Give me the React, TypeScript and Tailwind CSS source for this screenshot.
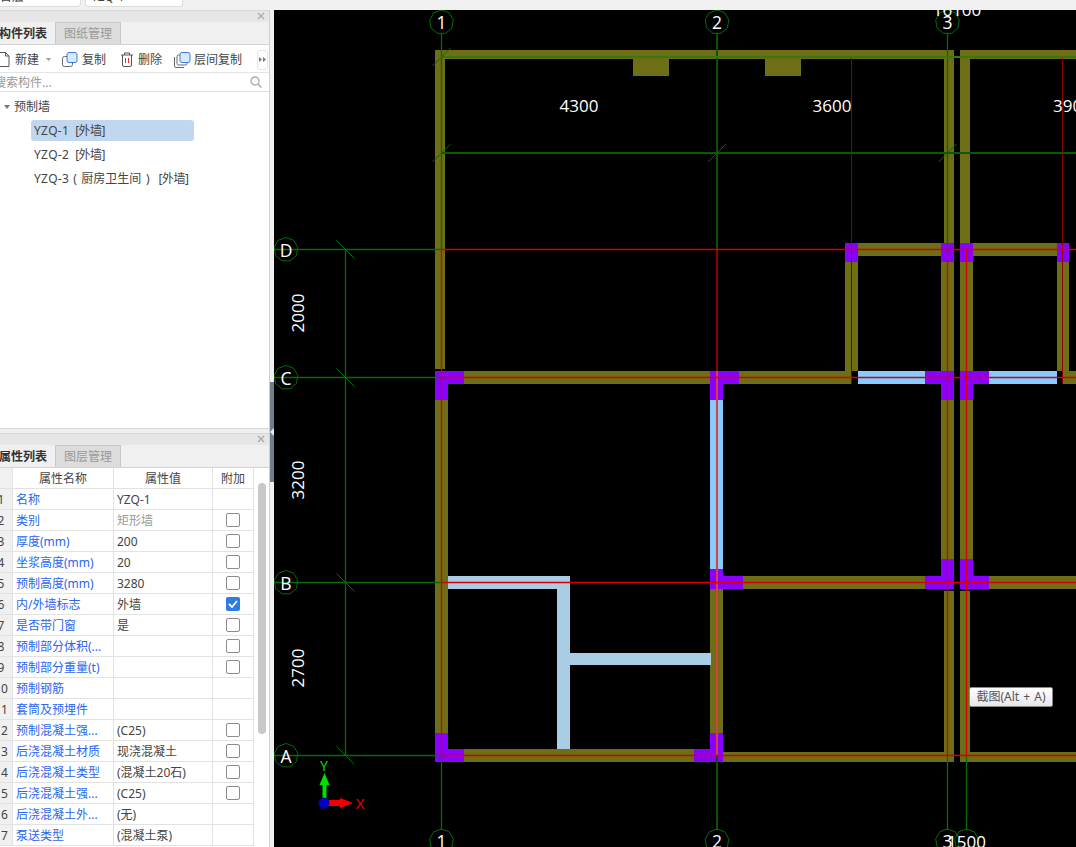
import React from 'react';

const OLIVE = '#6e6e16';
const PURPLE = '#8a00ff';
const BLUE = '#8acbff';
const PALE = '#a9cde4';

type R = [number, number, number, number];

// x1, y1, x2, y2 in page coordinates
const olive: R[] = [
  [435, 50, 954, 59],
  [960, 50, 1076, 59],
  [633, 59, 669, 76],
  [765, 59, 801, 76],
  [435, 59, 445, 369],
  [944, 59, 954, 243],
  [960, 59, 970, 243],
  [858, 243, 941, 256],
  [973, 243, 1057, 256],
  [845, 262, 858, 371],
  [941, 262, 954, 371],
  [960, 262, 973, 371],
  [1057, 262, 1069, 371],
  [464, 371, 710, 384],
  [739, 371, 852, 384],
  [1063, 371, 1076, 384],
  [941, 400, 954, 559],
  [960, 400, 973, 559],
  [435, 400, 448, 733],
  [743, 576, 925, 589],
  [989, 576, 1076, 589],
  [710, 589, 723, 733],
  [944, 591, 954, 762],
  [960, 591, 970, 762],
  [464, 749, 694, 762],
  [723, 752, 954, 762],
  [960, 752, 1076, 762],
];

const purple: R[] = [
  [845, 243, 858, 262],
  [941, 243, 954, 262],
  [960, 243, 973, 262],
  [1057, 243, 1069, 262],
  [435, 371, 464, 384],
  [435, 371, 448, 400],
  [710, 371, 739, 384],
  [710, 371, 723, 400],
  [925, 371, 954, 384],
  [941, 371, 954, 400],
  [960, 371, 989, 384],
  [960, 371, 973, 400],
  [710, 569, 723, 589],
  [710, 576, 743, 589],
  [925, 576, 954, 589],
  [941, 559, 954, 589],
  [960, 559, 973, 589],
  [960, 576, 989, 589],
  [435, 733, 448, 762],
  [435, 749, 464, 762],
  [710, 733, 723, 762],
  [694, 749, 723, 762],
];

const blue: R[] = [
  [858, 371, 925, 384],
  [989, 371, 1057, 384],
  [710, 400, 723, 569],
];

const pale: R[] = [
  [448, 576, 570, 589],
  [557, 576, 570, 749],
  [570, 653, 711, 665],
];

const GREEN = '#0a6a0a';
const RED = '#d80000';

// x1, y1, x2, y2, colour, width
const lines: [number, number, number, number, string, number][] = [
  [441.5, 33, 441.5, 249, GREEN, 1.3],
  [441.5, 249, 441.5, 755, RED, 1.3],
  [441.5, 755, 441.5, 830, GREEN, 1.3],
  [717, 33, 717, 249, '#0a5200', 2],
  [717, 249, 717, 371, '#8b0000', 2],
  [717, 371, 717, 755, '#d8403c', 2],
  [717, 755, 717, 830, '#0a5200', 2],
  [947.5, 33, 947.5, 249, GREEN, 1.3],
  [947.5, 249, 947.5, 755, RED, 1.3],
  [947.5, 755, 947.5, 830, GREEN, 1.3],
  [966.5, 249, 966.5, 755, RED, 1.3],
  [966.5, 755, 966.5, 830, GREEN, 1.3],
  [851.5, 58, 851.5, 384, '#8b0000', 1],
  [1062.5, 58, 1062.5, 384, '#8b0000', 1],
  [441, 57, 1076, 57, '#37780f', 2],
  [441, 153, 1076, 153, '#0a5a00', 2],
  [274, 249.5, 441, 249.5, GREEN, 1.3],
  [441, 249.5, 1076, 249.5, RED, 1.3],
  [274, 377.5, 441, 377.5, GREEN, 1.3],
  [441, 377.5, 1076, 377.5, RED, 1.3],
  [274, 582.5, 441, 582.5, GREEN, 1.3],
  [441, 582.5, 1076, 582.5, RED, 1.3],
  [274, 755.5, 441, 755.5, GREEN, 1.3],
  [441, 755.5, 1076, 755.5, RED, 1.3],
  [345.5, 249, 345.5, 756, GREEN, 1.3],
];

const ticks: [number, number, number][] = [
  [441.5, 57, 1],
  [441.5, 153, 1],
  [717, 153, 1],
  [947.5, 153, 1],
  [345.5, 249.5, -1],
  [345.5, 377.5, -1],
  [345.5, 582.5, -1],
  [345.5, 755.5, -1],
];

const bubbles: [number, number, string][] = [
  [441.5, 22, '1'],
  [717, 22, '2'],
  [947.5, 22, '3'],
  [286, 249.5, 'D'],
  [286, 377.5, 'C'],
  [286, 582.5, 'B'],
  [286, 755.5, 'A'],
  [441.5, 841, '1'],
  [717, 841, '2'],
  [947.5, 841, '3'],
  [966.5, 841, ''],
];

function ngon(cx: number, cy: number, r: number) {
  const pts: string[] = [];
  for (let i = 0; i < 9; i++) {
    const a = -Math.PI / 2 + (i * 2 * Math.PI) / 9;
    pts.push(`${(cx + r * Math.cos(a)).toFixed(1)},${(cy + r * Math.sin(a)).toFixed(1)}`);
  }
  return pts.join(' ');
}

function Rects({ list, fill }: { list: R[]; fill: string }) {
  return (
    <>
      {list.map(([a, b, c, d]) => (
        <rect key={`${a}-${b}-${c}-${d}`} x={a} y={b} width={c - a} height={d - b} fill={fill} />
      ))}
    </>
  );
}

function Drawing() {
  return (
    <svg viewBox="274 10 802 837" className="block h-[837px] w-[802px] font-['Open_Sans',sans-serif]">
      <rect x={274} y={10} width={802} height={837} fill="#000" />
      <Rects list={olive} fill={OLIVE} />
      <Rects list={pale} fill={PALE} />
      <Rects list={blue} fill={BLUE} />
      <Rects list={purple} fill={PURPLE} />
      {lines.map(([a, b, c, d, col, w], i) => (
        <line key={i} x1={a} y1={b} x2={c} y2={d} stroke={col} strokeWidth={w} />
      ))}
      {ticks.map(([x, y, dir]) => (
        <line key={`${x}-${y}`} x1={x - 9} y1={y + 9 * dir} x2={x + 9} y2={y - 9 * dir} stroke={GREEN} strokeWidth={1} />
      ))}
      {bubbles.map(([x, y, label]) => (
        <g key={`${x}-${y}`}>
          <polygon points={ngon(x, y, 12)} fill="none" stroke={GREEN} strokeWidth={1} />
          {label && (
            <text x={x} y={y + 7} textAnchor="middle" fontSize={17.5} fill="#fff">
              {label}
            </text>
          )}
        </g>
      ))}
      <text x={957} y={15.5} textAnchor="middle" fontSize={17} fill="#fff">16100</text>
      <text x={579} y={111.5} textAnchor="middle" fontSize={17} fill="#fff">4300</text>
      <text x={832} y={111.5} textAnchor="middle" fontSize={17} fill="#fff">3600</text>
      <text x={1053} y={111.5} fontSize={17} fill="#fff">3900</text>
      <text x={947} y={848} fontSize={17} fill="#fff">1500</text>
      <text transform="translate(303.500 313) rotate(-90)" textAnchor="middle" fontSize={17} fill="#fff">2000</text>
      <text transform="translate(303.500 480) rotate(-90)" textAnchor="middle" fontSize={17} fill="#fff">3200</text>
      <text transform="translate(303.500 668) rotate(-90)" textAnchor="middle" fontSize={17} fill="#fff">2700</text>

      {/* axis marker */}
      <rect x={322.5} y={783} width={4} height={20} fill="#00e000" />
      <polygon points="324.5,773 329.5,785 319.5,785" fill="#00e000" />
      <rect x={324} y={800} width={18} height={6} fill="#f00000" />
      <polygon points="353,803 340,798 340,808" fill="#f00000" />
      <circle cx={324} cy={803} r={5.5} fill="#0000c0" />
      <text x={324} y={771} textAnchor="middle" fontSize={14} fill="#00e000">Y</text>
      <text x={360} y={809} textAnchor="middle" fontSize={15} fill="#f00000">X</text>
    </svg>
  );
}

function CloseBar() {
  return (
    <div className="flex h-[12px] shrink-0 items-center justify-end border-t border-[#d8d8d8] bg-[#e6e6e6] pb-[1px] pr-[4px]">
      <svg width="8" height="8" viewBox="0 0 8 8">
        <path d="M1 1l6 6M7 1L1 7" stroke="#a8a8a8" strokeWidth="1.2" fill="none" />
      </svg>
    </div>
  );
}

function Tabs({ a, b }: { a: string; b: string }) {
  return (
    <div className="flex h-[23px] shrink-0 border-b border-[#d4d4d4] bg-[#f0f0f0]">
      <div className="flex w-[55px] items-center pt-[1px] text-[12px] font-bold text-[#333]">
        <span className="-ml-[1px] whitespace-nowrap">{a}</span>
      </div>
      <div className="flex w-[66px] items-center justify-center border border-b-0 border-[#c8c8c8] bg-[#dcdcdc] pt-[1px] text-[12px] text-[#999]">
        {b}
      </div>
    </div>
  );
}

function Toolbar() {
  return (
    <div className="flex h-[28px] shrink-0 items-center whitespace-nowrap border-b border-[#e4e4e4] bg-white pt-[2px] text-[12px] text-[#444]">
      <svg width="12" height="15" viewBox="0 0 12 15" className="-ml-[2px]">
        <path d="M1 .5h6.5L11 4v10.5H1zM7.5.5V4H11" fill="none" stroke="#555" />
      </svg>
      <span className="ml-[5px]">新建</span>
      <svg width="5" height="3" viewBox="0 0 5 3" className="ml-[7px]">
        <path d="M0 0h5L2.500 3z" fill="#999" />
      </svg>
      <svg width="16" height="16" viewBox="0 0 16 16" className="ml-[11px]">
        <rect x=".5" y="4.500" width="10" height="10" rx="2" fill="#fff" stroke="#666" />
        <rect x="5" y=".5" width="10" height="10" rx="2" fill="#d9e9fb" stroke="#3a7bd5" />
      </svg>
      <span className="ml-[4px]">复制</span>
      <svg width="14" height="15" viewBox="0 0 14 15" className="ml-[14px]">
        <path d="M1 3h12M4.500 3V1h5v2M2.500 3v10a1.500 1.500 0 0 0 1.500 1.500h6a1.500 1.500 0 0 0 1.500-1.500V3" fill="none" stroke="#555" />
        <path d="M5.500 6v5M8.500 6v5" stroke="#d33" />
      </svg>
      <span className="ml-[4px]">删除</span>
      <svg width="17" height="16" viewBox="0 0 17 16" className="ml-[12px]">
        <path d="M.5 5v9a1.500 1.500 0 0 0 1.500 1.500h8" fill="none" stroke="#666" />
        <rect x="3" y="3" width="10" height="10" rx="1.500" fill="#fff" stroke="#666" />
        <rect x="6" y=".5" width="10" height="10" rx="2" fill="#d9e9fb" stroke="#3a7bd5" />
      </svg>
      <span className="ml-[3px]">层间复制</span>
      <div className="ml-[15px] flex h-[20px] w-[11px] items-center justify-center rounded-[3px] border border-[#e4e4e4]">
        <svg width="7" height="5" viewBox="0 0 7 5">
          <path d="M0 0l3 2.500L0 5zM4 0l3 2.500L4 5z" fill="#777" />
        </svg>
      </div>
    </div>
  );
}

function Search() {
  return (
    <div className="flex h-[19px] shrink-0 items-center justify-between border-b border-[#e0e0e0] bg-white pr-[7px] text-[12px] text-[#999]">
      <span className="-ml-[6px] pt-[1px]">搜索构件...</span>
      <svg width="12" height="12" viewBox="0 0 12 12">
        <circle cx="5" cy="5" r="4" fill="none" stroke="#aaa" strokeWidth="1.300" />
        <path d="M8 8l3.500 3.500" stroke="#aaa" strokeWidth="1.500" />
      </svg>
    </div>
  );
}

function Tree() {
  return (
    <div className="flex flex-1 flex-col bg-white pt-[4px] text-[12px] text-[#444]">
      <div className="flex h-[22px] items-center">
        <svg width="6" height="4" viewBox="0 0 6 4" className="ml-[4px]">
          <path d="M0 0h6L3 4z" fill="#777" />
        </svg>
        <span className="ml-[4px]">预制墙</span>
      </div>
      <div className="ml-[31px] mt-[2px] flex h-[21px] w-[163px] items-center gap-[6px] rounded-[3px] bg-[#c0d7ef] pl-[3px]">
        <span className="tracking-[0.3px]">YZQ-1</span>
        <span className="tracking-[-0.5px]">[外墙]</span>
      </div>
      <div className="ml-[31px] mt-[3px] flex h-[21px] items-center gap-[6px] pl-[3px]">
        <span className="tracking-[0.3px]">YZQ-2</span>
        <span className="tracking-[-0.5px]">[外墙]</span>
      </div>
      <div className="ml-[31px] mt-[3px] flex h-[21px] items-center whitespace-pre pl-[3px]">
        <span className="tracking-[0.3px]">YZQ-3</span>
        <span className="ml-[4px] [word-spacing:1.5px]">( 厨房卫生间 )</span>
        <span className="ml-[9px] tracking-[-0.5px]">[外墙]</span>
      </div>
    </div>
  );
}

type Row = { name: string; value?: string; grey?: boolean; box?: boolean; on?: boolean };

const rows: Row[] = [
  { name: '名称', value: 'YZQ-1' },
  { name: '类别', value: '矩形墙', grey: true, box: true },
  { name: '厚度(mm)', value: '200', box: true },
  { name: '坐浆高度(mm)', value: '20', box: true },
  { name: '预制高度(mm)', value: '3280', box: true },
  { name: '内/外墙标志', value: '外墙', box: true, on: true },
  { name: '是否带门窗', value: '是', box: true },
  { name: '预制部分体积(...', box: true },
  { name: '预制部分重量(t)', box: true },
  { name: '预制钢筋' },
  { name: '套筒及预埋件' },
  { name: '预制混凝土强...', value: '(C25)', box: true },
  { name: '后浇混凝土材质', value: '现浇混凝土', box: true },
  { name: '后浇混凝土类型', value: '(混凝土20石)', box: true },
  { name: '后浇混凝土强...', value: '(C25)', box: true },
  { name: '后浇混凝土外...', value: '(无)' },
  { name: '泵送类型', value: '(混凝土泵)' },
];

const cell = 'flex items-center border-b border-r border-[#e2e2e2]';

function PropTable() {
  return (
    <div className="flex flex-1 overflow-hidden bg-white text-[12px]">
      <div className="grid w-[254px] shrink-0 auto-rows-[21px] grid-cols-[13px_101px_99px_41px] content-start">
        <div className={`${cell} bg-[#f0f0f0]`} />
        <div className={`${cell} justify-center pt-[1px] text-[#444]`}>属性名称</div>
        <div className={`${cell} justify-center pt-[1px] text-[#444]`}>属性值</div>
        <div className={`${cell} justify-center pt-[1px] text-[#444]`}>附加</div>
        {rows.map((r, i) => (
          <React.Fragment key={r.name}>
            <div className={`${cell} bg-[#f0f0f0] pt-[1px] text-[#444]`}>
              <span className="-ml-[6px] block w-[14px] shrink-0 text-center">{i + 1}</span>
            </div>
            <div className={`${cell} whitespace-nowrap pl-[3px] pt-[1px] text-[#2b66f0]`}>{r.name}</div>
            <div className={`${cell} whitespace-nowrap pl-[3px] pt-[1px] ${r.grey ? 'text-[#999]' : 'text-[#444]'}`}>{r.value}</div>
            <div className={`${cell} justify-center`}>
              {r.box &&
                (r.on ? (
                  <div className="flex h-[14px] w-[14px] items-center justify-center rounded-[2px] bg-[#2b7de1]">
                    <svg width="10" height="8" viewBox="0 0 10 8">
                      <path d="M1 4l3 3 5-6" fill="none" stroke="#fff" strokeWidth="1.800" />
                    </svg>
                  </div>
                ) : (
                  <div className="h-[14px] w-[14px] rounded-[2px] border border-[#8c8c8c] bg-white" />
                ))}
            </div>
          </React.Fragment>
        ))}
      </div>
      <div className="flex flex-1 justify-center pt-[15px]">
        <div className="ml-[1px] h-[251px] w-[8px] rounded-[4px] bg-[#c8c8c8]" />
      </div>
    </div>
  );
}

export default function App() {
  return (
    <div className="flex h-[847px] w-[1076px] flex-col overflow-hidden bg-[#f0f0f0] font-['Noto_Sans','Noto_Sans_CJK_SC',sans-serif]">
      <div className="flex h-[10px] shrink-0 items-start gap-[4px] overflow-hidden text-[12px] leading-[14px] text-[#444]">
        <div className="-ml-[4px] h-[7px] w-[85px] overflow-hidden rounded-b-[4px] border-b border-r border-[#ddd] bg-white pl-[4px]">
          <div className="-mt-[10px]">首层</div>
        </div>
        <div className="h-[7px] w-[98px] overflow-hidden rounded-b-[4px] border-x border-b border-[#ddd] bg-white pl-[5px]">
          <div className="-mt-[10px]">YZQ-1</div>
        </div>
      </div>
      <div className="flex min-h-0 flex-1">
        <div className="flex w-[270px] shrink-0 flex-col border-r border-[#d0d0d0]">
          <div className="flex h-[419px] shrink-0 flex-col border-b border-[#d8d8d8]">
            <CloseBar />
            <Tabs a="构件列表" b="图纸管理" />
            <Toolbar />
            <Search />
            <Tree />
          </div>
          <div className="h-[4px] shrink-0" />
          <div className="flex min-h-0 flex-1 flex-col">
            <CloseBar />
            <Tabs a="属性列表" b="图层管理" />
            <PropTable />
          </div>
        </div>
        <div className="flex w-[4px] shrink-0 flex-col pt-[372px]">
          <div className="flex h-[100px] items-center bg-[#6e7f8c]">
            <svg width="4" height="8" viewBox="0 0 4 8">
              <path d="M4 0v8L0 4z" fill="#e4e8ea" />
            </svg>
          </div>
        </div>
        <div className="relative flex-1">
          <Drawing />
          <div className="absolute left-[695px] top-[677px] flex h-[20px] w-[84px] items-center justify-center whitespace-nowrap rounded-[2px] border border-[#8a8a8a] bg-gradient-to-b from-white to-[#e6e6f0] text-[12px] text-[#555] [word-spacing:1px]">
            截图(Alt + A)
          </div>
        </div>
      </div>
    </div>
  );
}
